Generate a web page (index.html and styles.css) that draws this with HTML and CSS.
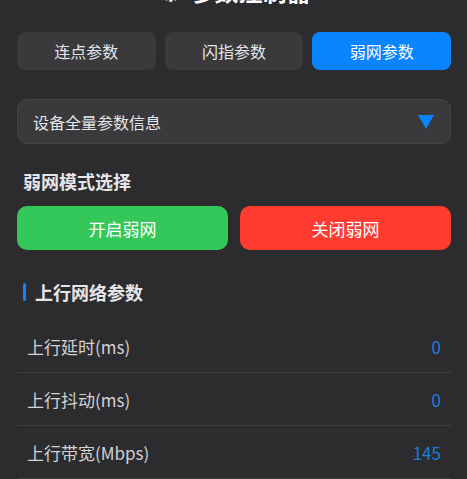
FILE: index.html
```html
<!DOCTYPE html>
<html lang="zh">
<head>
<meta charset="utf-8">
<link rel="stylesheet" href="styles.css">
</head>
<body>
<div class="page">
  <h1 class="title"><span class="title-icon">⚙</span>参数控制器</h1>
  <div class="tabs">
    <div class="tab">连点参数</div>
    <div class="tab">闪指参数</div>
    <div class="tab active">弱网参数</div>
  </div>
  <div class="select">
    <span>设备全量参数信息</span>
    <svg class="caret" width="16" height="14" viewBox="0 0 16 14"><path d="M0 0H16L8 14Z" fill="#0a84ff"/></svg>
  </div>
  <div class="mode-title">弱网模式选择</div>
  <div class="mode-buttons">
    <div class="btn on">开启弱网</div>
    <div class="btn off">关闭弱网</div>
  </div>
  <div class="section-title"><span class="bar"></span>上行网络参数</div>
  <div class="rows">
    <div class="row"><span>上行延时(ms)</span><span class="val">0</span></div>
    <div class="row"><span>上行抖动(ms)</span><span class="val">0</span></div>
    <div class="row"><span>上行带宽(Mbps)</span><span class="val">145</span></div>
  </div>
</div>
</body>
</html>
```
FILE: styles.css
```css
html, body {
  margin: 0;
  padding: 0;
  background: #2c2c2e;
  height: 100%;
  overflow: hidden;
}
body {
  font-family: "Noto Sans CJK SC", "Noto Sans", sans-serif;
  color: #e5e5ea;
}
.page {
  padding: 0 16px 0 17px;
}
.title {
  margin: -24px 0 0;
  height: 30px;
  font-size: 24px;
  line-height: 30px;
  font-weight: 700;
  text-align: center;
  color: #ffffff;
}
.title-icon {
  display: inline-block;
  width: 26px;
  font-size: 24px;
  margin-right: 7px;
  text-align: center;
}
.tabs {
  display: grid;
  grid-template-columns: 1fr 1fr 1fr;
  gap: 9px;
  margin-top: 26px;
}
.tab {
  height: 38px;
  border-radius: 8px;
  background: #3a3a3c;
  color: #e5e5ea;
  font-size: 16px;
  display: flex;
  align-items: center;
  justify-content: center;
}
.tab.active {
  background: #0a84ff;
  color: #ffffff;
}
.select {
  margin-top: 29px;
  height: 43px;
  border: 1px solid #444446;
  border-radius: 10px;
  background: #3a3a3c;
  display: flex;
  align-items: center;
  justify-content: space-between;
  padding: 0 16px 0 15px;
  font-size: 16px;
  color: #e5e5ea;
}
.caret {
  display: block;
}
.mode-title {
  margin-top: 25px;
  padding-left: 6px;
  font-size: 18px;
  font-weight: 700;
  line-height: 24px;
  color: #e5e5ea;
}
.mode-buttons {
  display: grid;
  grid-template-columns: 1fr 1fr;
  gap: 12px;
  margin-top: 13px;
}
.btn {
  height: 44px;
  border-radius: 10px;
  color: #ffffff;
  font-size: 17px;
  display: flex;
  align-items: center;
  justify-content: center;
}
.btn.on { background: #34c759; }
.btn.off { background: #ff3b30; }
.section-title {
  margin-top: 30px;
  display: flex;
  align-items: center;
  gap: 9px;
  padding-left: 6px;
  font-size: 18px;
  font-weight: 700;
  line-height: 24px;
  color: #e5e5ea;
}
.bar {
  width: 3px;
  height: 18px;
  border-radius: 2px;
  background: #0a84ff;
}
.rows {
  margin-top: 16px;
}
.row {
  height: 52px;
  border-bottom: 1px solid #3f3f41;
  display: flex;
  align-items: center;
  justify-content: space-between;
  padding: 0 10px 0 10px;
  font-size: 17px;
  color: #d1d1d6;
}
.val {
  color: #1a7fe0;
}
```
